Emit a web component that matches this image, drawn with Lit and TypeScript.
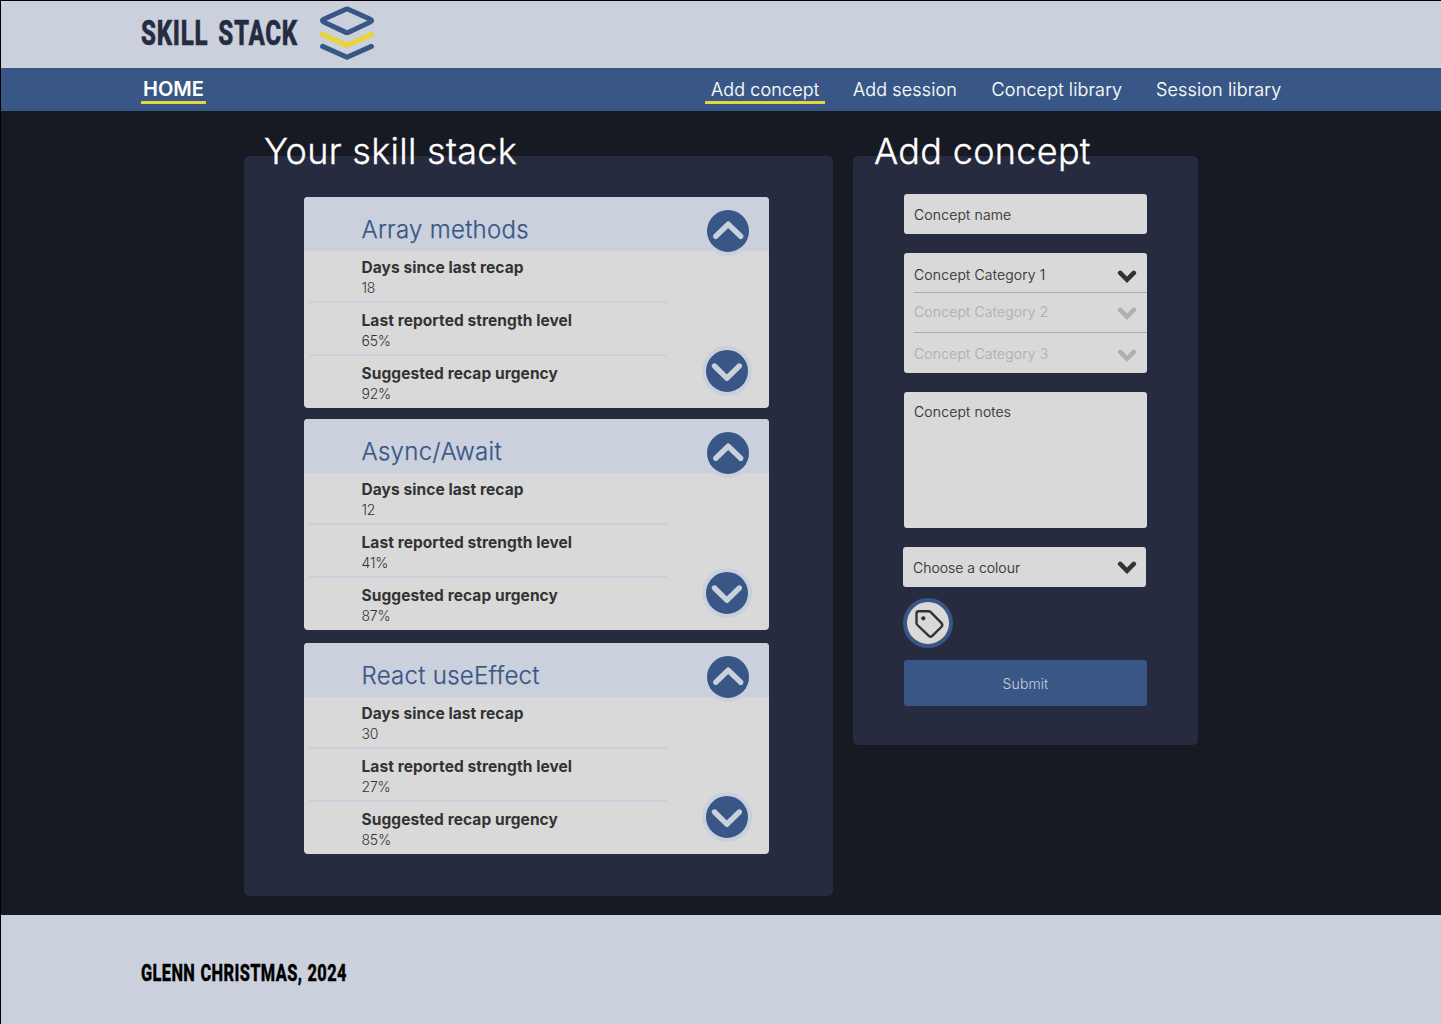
import { LitElement, html, css, svg } from "lit";
import { customElement, property } from "lit/decorators.js";

@customElement("concept-card")
class ConceptCard extends LitElement {
  @property() name = "";
  @property() days = "";
  @property() strength = "";
  @property() urgency = "";

  static styles = css`
    :host { display: block; width: 465px; height: 211px; }
    .card { position: relative; height: 211px; border-radius: 4px; background: #d9d9d9; overflow: hidden; }
    .head { box-sizing: border-box; height: 54px; padding: 16px 0 0 57.5px; background: #cad0dc; color: #385786;
      font-size: 24px; line-height: 34px; font-weight: 300; letter-spacing: 0.28px; -webkit-text-stroke: 0.25px currentColor; white-space: nowrap; }
    .row { box-sizing: border-box; width: 358px; height: 53px; margin-left: 5px; padding: 8px 0 0 52.5px; border-bottom: 2px solid #cad0dc; }
    .row:first-of-type { height: 52px; padding-top: 7px; }
    .row.last { border-bottom: 0; }
    .label { font-size: 15.5px; line-height: 20px; font-weight: 700; letter-spacing: 0.07px; color: #333; white-space: nowrap; }
    .value { font-size: 14px; line-height: 20px; font-weight: 300; letter-spacing: -0.2px; color: #333; }
    .arrows { position: absolute; right: 16px; top: 9px; width: 51px; height: 192px; }
  `;

  render() {
    return html`<article class="card">
      <div class="head">${this.name}</div>
      <section class="row"><div class="label">Days since last recap</div><div class="value">${this.days}</div></section>
      <section class="row"><div class="label">Last reported strength level</div><div class="value">${this.strength}</div></section>
      <section class="row last"><div class="label">Suggested recap urgency</div><div class="value">${this.urgency}</div></section>
      <svg class="arrows" viewBox="0 0 51 192" fill="none" stroke="#cad0dc" stroke-width="5.4" stroke-linecap="round" stroke-linejoin="round">
        <circle cx="26" cy="25" r="23" stroke-width="4" fill="#385786" />
        <path d="M13.8 30.3 26.2 18.2 38.7 30.3" />
        <circle cx="25" cy="165" r="23" stroke-width="4" fill="#385786" />
        <path d="M12.5 160 24.8 172.2 37.3 160" />
      </svg>
    </article>`;
  }
}

const chevron = () => svg`<svg class="chevron" width="20" height="14" viewBox="0 0 20 14" fill="none" stroke="currentColor" stroke-width="4.6" stroke-linecap="round" stroke-linejoin="miter"><path d="M3.2 2.9 10 9.8 16.8 2.9" /></svg>`;

@customElement("app-root")
class AppRoot extends LitElement {
  static styles = css`
    :host { display: block; font-family: Inter, "Liberation Sans", sans-serif; font-optical-sizing: none; }
    .page { box-sizing: border-box; width: 1441px; height: 1024px; border: solid #000; border-width: 1px 0 0 1px;
      background: #171923; display: flex; flex-direction: column; overflow: hidden; }
    header { height: 67px; flex: none; background: #cad0dc; padding-left: 140px; display: flex; }
    .display { font-family: Roboto, "Liberation Sans", sans-serif; font-weight: 800; transform-origin: 0 0; white-space: nowrap; }
    .slot { width: 178px; }
    .wordmark { width: max-content; font-size: 35.5px; line-height: 65px; color: #262b3f; letter-spacing: 1px; word-spacing: 5px; -webkit-text-stroke: 0.5px currentColor; transform: scaleX(0.681); }
    .mark { width: 56px; height: 56px; margin-top: 4px; }
    nav { box-sizing: border-box; height: 43px; flex: none; background: #385786; padding: 8px 0 0 140px; display: flex; color: #fff; }
    .link { box-sizing: border-box; flex: none; height: 28px; font-size: 18px; line-height: 27px; font-weight: 300; letter-spacing: 0.14px; -webkit-text-stroke: 0.15px currentColor; white-space: nowrap; border-bottom: 3px solid transparent; }
    .link.on { border-color: #e8d43b; }
    .home { width: 65px; padding-left: 2px; font-size: 20px; line-height: 26px; font-weight: 600; letter-spacing: 0; -webkit-text-stroke: 0; margin-right: 499px; }
    .concept { width: 120px; padding-left: 6px; margin-right: 28px; }
    .session { width: 138.6px; }
    .clib { width: 164.4px; }
    main { flex: none; height: 804px; display: flex; gap: 20px; padding: 45px 0 0 243px; box-sizing: border-box; }
    .panel { box-sizing: border-box; background: #262b3f; border-radius: 5px; }
    .stack { width: 589px; height: 740px; padding-left: 60px; }
    .add { width: 345px; height: 589px; padding-left: 51px; color: #333; font-size: 14px; font-weight: 300; }
    h1 { margin: -28px 0 0; height: 69px; color: #fff; font-size: 36px; line-height: 46px; font-weight: 300; letter-spacing: 0.3px; -webkit-text-stroke: 0.35px currentColor; white-space: nowrap; }
    .stack h1 { margin-left: -40px; }
    .add h1 { margin-left: -30px; height: 66px; }
    .cards { display: flex; flex-direction: column; gap: 11px; }
    .cards concept-card:last-child { margin-top: 2px; }
    .field { box-sizing: border-box; width: 243px; background: #d9d9d9; border-radius: 3px; padding-left: 10px; margin-bottom: 19px; letter-spacing: 0.16px; -webkit-text-stroke: 0.15px currentColor; }
    .line { box-sizing: border-box; display: flex; justify-content: space-between; height: 40px; padding-right: 10px; line-height: 20px; }
    .name { line-height: 42px; height: 40px; }
    .cats { height: 120px; }
    .cats .line { border-bottom: 1px solid #acacac; padding-top: 12px; }
    .cats .off { color: #b0b0b0; padding-top: 9px; }
    .cats .off.end { border: 0; padding-top: 11px; }
    .chevron { margin-top: 5px; }
    .notes { height: 136px; line-height: 40px; }
    .colour { margin: 0 0 11px -1px; letter-spacing: 0; }
    .colour .line { padding-right: 9px; padding-top: 11px; }
    .colour .chevron { margin-top: 3px; }
    .tag { display: block; width: 50px; height: 50px; margin: 0 0 12px -1px; }
    .submit { width: 243px; height: 46px; line-height: 48px; border-radius: 3px; background: #385786; color: #cad0dc; text-align: center; letter-spacing: 0.1px; }
    footer { flex: 1; background: #cad0dc; padding: 38px 0 0 140px; }
    .credit { width: max-content; font-size: 24px; line-height: 40px; color: #000; letter-spacing: 0.6px; word-spacing: 1px; -webkit-text-stroke: 0.4px currentColor; transform: scaleX(0.681); }
  `;

  render() {
    return html`<div class="page">
      <header>
        <div class="slot"><div class="wordmark display">SKILL STACK</div></div>
        <svg class="mark" viewBox="0 0 56 56" fill="none" stroke="#385786" stroke-width="5" stroke-linecap="round" stroke-linejoin="round">
          <path d="M26.9 4.2Q28 3.7 29.1 4.2L50.8 14Q54.4 15.6 50.8 17.2L29.1 27.4Q28 27.9 26.9 27.4L5.2 17.2Q1.6 15.6 5.2 14Z" />
          <path d="M3.6 29.4 28 40.4 52.4 29.4" stroke="#e8d43b" />
          <path d="M3.6 41.4 28 52.2 52.4 41.4" />
        </svg>
      </header>
      <nav>
        <a class="link on home">HOME</a><a class="link on concept">Add concept</a><a class="link session">Add session</a><a class="link clib">Concept library</a><a class="link">Session library</a>
      </nav>
      <main>
        <section class="panel stack">
          <h1>Your skill stack</h1>
          <div class="cards">
            <concept-card name="Array methods" days="18" strength="65%" urgency="92%"></concept-card>
            <concept-card name="Async/Await" days="12" strength="41%" urgency="87%"></concept-card>
            <concept-card name="React useEffect" days="30" strength="27%" urgency="85%"></concept-card>
          </div>
        </section>
        <section class="panel add">
          <h1>Add concept</h1>
          <div class="field name">Concept name</div>
          <div class="field cats">
            <div class="line"><span>Concept Category 1</span>${chevron()}</div>
            <div class="line off"><span>Concept Category 2</span>${chevron()}</div>
            <div class="line off end"><span>Concept Category 3</span>${chevron()}</div>
          </div>
          <div class="field notes">Concept notes</div>
          <div class="field colour"><div class="line"><span>Choose a colour</span>${chevron()}</div></div>
          <svg class="tag" viewBox="0 0 50 50" fill="none">
            <circle cx="25" cy="25" r="23" fill="#d9d9d9" stroke="#385786" stroke-width="4" />
            <path d="M13.5 15.5a2.2 2.2 0 0 1 2.2-2.2h9.9a3 3 0 0 1 2.1.9L38.3 24.9a2.9 2.9 0 0 1 0 4.1L29.6 37.7a2.9 2.9 0 0 1-4.1 0L14.4 27a3 3 0 0 1-.9-2.1Z" stroke="#333" stroke-width="2.4" stroke-linejoin="round" />
            <circle cx="20.3" cy="20.3" r="2.1" fill="#333" />
          </svg>
          <div class="submit">Submit</div>
        </section>
      </main>
      <footer><div class="credit display">GLENN CHRISTMAS, 2024</div></footer>
    </div>`;
  }
}
